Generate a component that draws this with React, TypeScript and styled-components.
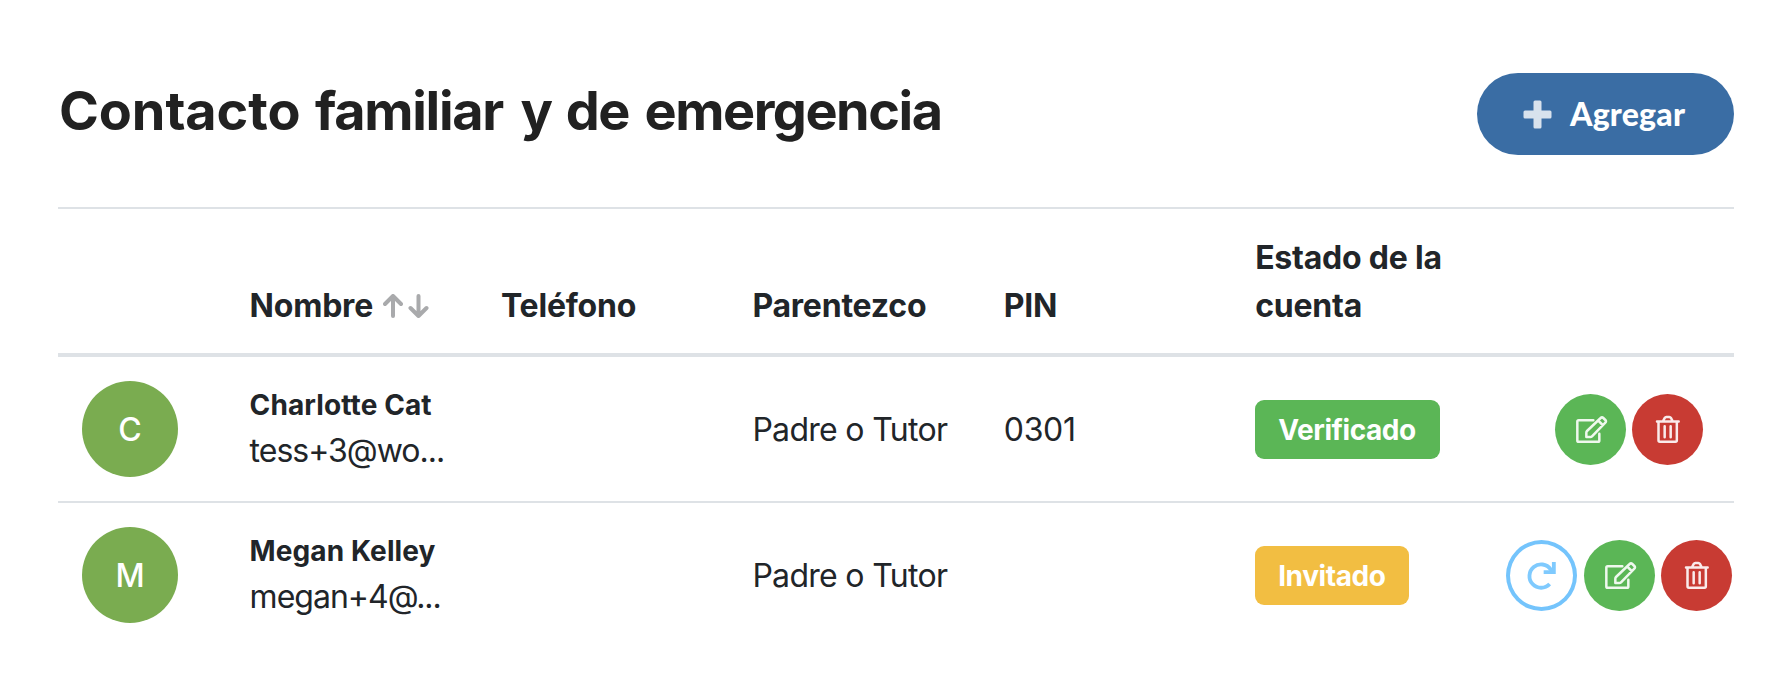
import React from "react";
import styled, { createGlobalStyle } from "styled-components";

const GlobalStyle = createGlobalStyle`
  *, *::before, *::after { box-sizing: border-box; }
  body {
    margin: 0;
    background: #fff;
    color: #212529;
    font-family: Inter, "Liberation Sans", sans-serif;
    font-size: 32px;
    line-height: 48px;
  }
`;

const Page = styled.main`
  padding: 73px 58px 0;
`;

const Header = styled.header`
  display: flex;
  justify-content: space-between;
  align-items: flex-start;
  height: 134px;
`;

const Title = styled.h1`
  margin: 5px 0 0 1px;
  color: #212121;
  font-size: 54px;
  font-weight: 700;
  line-height: 66px;
  white-space: nowrap;
`;

const Word = styled.span<{ $tracking: number; $gap?: number }>`
  letter-spacing: ${(p) => p.$tracking}px;
  word-spacing: ${(p) => p.$gap ?? 0}px;
`;

const AddButton = styled.button`
  display: flex;
  align-items: center;
  width: 257px;
  height: 82px;
  padding: 0 0 0 46px;
  border: 0;
  border-radius: 41px;
  background: #3a6da4;
  color: #fff;
  font: 900 32px/48px Lato, sans-serif;
  letter-spacing: 0.2px;
`;

const PlusIcon = styled.svg`
  width: 29px;
  height: 29px;
  margin-right: 18px;
  fill: #d8e2ed;
`;

const Table = styled.table`
  width: 100%;
  table-layout: fixed;
  border-collapse: separate;
  border-spacing: 0;
`;

const HeadCell = styled.th<{ $width: string }>`
  width: ${(p) => p.$width};
  height: 150px;
  padding: 25px 24px 23px;
  border-top: 2px solid #dee2e6;
  border-bottom: 4px solid #dee2e6;
  font-weight: 700;
  letter-spacing: -0.22px;
  text-align: left;
  vertical-align: bottom;
`;

const HeadLabel = styled.span`
  display: flex;
  align-items: center;
`;

const SortIcon = styled.svg`
  width: 46px;
  height: 24px;
  margin: -1px 0 0 10px;
  fill: none;
  stroke: #a9aaac;
  stroke-width: 4;
  stroke-linecap: round;
  stroke-linejoin: round;
`;

const Row = styled.tr`
  & + & > td { border-top: 2px solid #dee2e6; }
`;

const Cell = styled.td<{ $bare?: boolean }>`
  padding: ${(p) => (p.$bare ? "0" : "24px")};
  vertical-align: middle;
  white-space: nowrap;
`;

const Value = styled.div<{ $tracking?: number }>`
  padding-top: 2px;
  letter-spacing: ${(p) => p.$tracking ?? 0}px;
`;

const Avatar = styled.div`
  display: flex;
  align-items: center;
  justify-content: center;
  width: 96px;
  height: 96px;
  padding-top: 2px;
  border-radius: 50%;
  background: #7aac50;
  color: #fff;
  font-weight: 500;
`;

const Contact = styled.div`
  padding-bottom: 2px;
`;

const Name = styled.div`
  font-size: 28px;
  font-weight: 700;
  line-height: 46px;
  letter-spacing: 0.1px;
`;

const Email = styled.div`
  line-height: 46px;
  letter-spacing: -1px;
`;

const Badge = styled.span<{ $color: string }>`
  display: block;
  width: max-content;
  height: 59px;
  padding: 1px 24px 0 23px;
  border-radius: 9px;
  background: ${(p) => p.$color};
  color: #fff;
  font-size: 28px;
  font-weight: 700;
  line-height: 59px;
  letter-spacing: -0.42px;
`;

const Actions = styled.div<{ $inset: number }>`
  display: flex;
  justify-content: flex-end;
  gap: 6.5px;
  padding-right: ${(p) => p.$inset}px;
`;

const IconButton = styled.button<{ $color: string; $outline?: boolean }>`
  width: 71px;
  height: 71px;
  flex: none;
  padding: 0;
  border: 0;
  border-radius: 50%;
  background: ${(p) => (p.$outline ? "#fff" : p.$color)};
  box-shadow: ${(p) => (p.$outline ? `inset 0 0 0 4px ${p.$color}` : "none")};
`;

const Glyph = styled.svg`
  display: block;
  width: 71px;
  height: 71px;
  fill: none;
  stroke: rgba(255, 255, 255, 0.9);
  stroke-width: 7.5;
  stroke-linecap: round;
  stroke-linejoin: round;
`;

const EditButton = () => (
  <IconButton $color="#5bb656" aria-label="Editar">
    <Glyph viewBox="0 0 213 213">
      <path d="M115 78.500H71q-4 0-4 4v57q0 4 4 4h58q4 0 4-4v-20" />
      <path d="M94 129v-13q0-3 2-5l41-39q4-4 8 0l6 6q4 4 0 8l-40 41q-2 2-5 2zM130 80l13 13" />
    </Glyph>
  </IconButton>
);

const DeleteButton = () => (
  <IconButton $color="#c83b33" aria-label="Eliminar">
    <Glyph viewBox="0 0 213 213">
      <path d="M75 82.500h65M79.500 83v56q0 4 4 4h47q4 0 4-4V83M94 80l4-8q2-3 5-3h9q3 0 5 3l4 8M98 97v33M116 97v33" />
    </Glyph>
  </IconButton>
);

const ResendButton = () => (
  <IconButton $color="#74c4fc" $outline aria-label="Reenviar">
    <Glyph viewBox="0 0 213 213">
      <g stroke="#7fcafe" strokeWidth="11.500" strokeLinecap="butt" strokeLinejoin="miter">
        <path d="M131 132A35 35 0 1 1 134 88l8 9" />
        <path d="M143.500 66V96.500H113" />
      </g>
    </Glyph>
  </IconButton>
);

const contacts = [
  { initial: "C", name: "Charlotte Cat", email: "tess+3@wo...", relation: "Padre o Tutor", pin: "0301", status: "Verificado", color: "#5bb656", resend: false },
  { initial: "M", name: "Megan Kelley", email: "megan+4@...", relation: "Padre o Tutor", pin: "", status: "Invitado", color: "#f2be42", resend: true },
];

export default function App() {
  return (
    <Page>
      <GlobalStyle />
      <Header>
        <Title>
          <Word $tracking={-0.1} $gap={2}>Contacto </Word>
          <Word $tracking={-1.3} $gap={6}>familiar </Word>
          <Word $tracking={0} $gap={0}>y </Word>
          <Word $tracking={-1.6} $gap={4.5}>de </Word>
          <Word $tracking={-1.5}>emergencia</Word>
        </Title>
        <AddButton>
          <PlusIcon viewBox="0 0 29 29">
            <path d="M12 .5h5q1.500 0 1.500 1.500v8.500H27q1.500 0 1.500 1.500v5q0 1.500-1.500 1.500h-8.500V27q0 1.500-1.500 1.500h-5q-1.500 0-1.500-1.500v-8.500H2Q.5 18.500 .5 17v-5q0-1.500 1.500-1.500h8.500V2Q10.500 .5 12 .5z" />
          </PlusIcon>
          Agregar
        </AddButton>
      </Header>
      <Table>
        <thead>
          <tr>
            <HeadCell $width="10%" />
            <HeadCell $width="15%">
              <HeadLabel>
                Nombre
                <SortIcon viewBox="0 0 46 24">
                  <path d="M10 22V2M2 10l8-8 8 8M35.500 2v20M27.500 14l8 8 8-8" />
                </SortIcon>
              </HeadLabel>
            </HeadCell>
            <HeadCell $width="15%">Teléfono</HeadCell>
            <HeadCell $width="15%">Parentezco</HeadCell>
            <HeadCell $width="15%">PIN</HeadCell>
            <HeadCell $width="15%">Estado de la cuenta</HeadCell>
            <HeadCell $width="15%" />
          </tr>
        </thead>
        <tbody>
          {contacts.map((c) => (
            <Row key={c.name}>
              <Cell><Avatar>{c.initial}</Avatar></Cell>
              <Cell>
                <Contact>
                  <Name>{c.name}</Name>
                  <Email>{c.email}</Email>
                </Contact>
              </Cell>
              <Cell />
              <Cell><Value $tracking={-0.7}>{c.relation}</Value></Cell>
              <Cell><Value $tracking={-0.3}>{c.pin}</Value></Cell>
              <Cell><Badge $color={c.color}>{c.status}</Badge></Cell>
              <Cell $bare>
                <Actions $inset={c.resend ? 2 : 31}>
                  {c.resend && <ResendButton />}
                  <EditButton />
                  <DeleteButton />
                </Actions>
              </Cell>
            </Row>
          ))}
        </tbody>
      </Table>
    </Page>
  );
}
